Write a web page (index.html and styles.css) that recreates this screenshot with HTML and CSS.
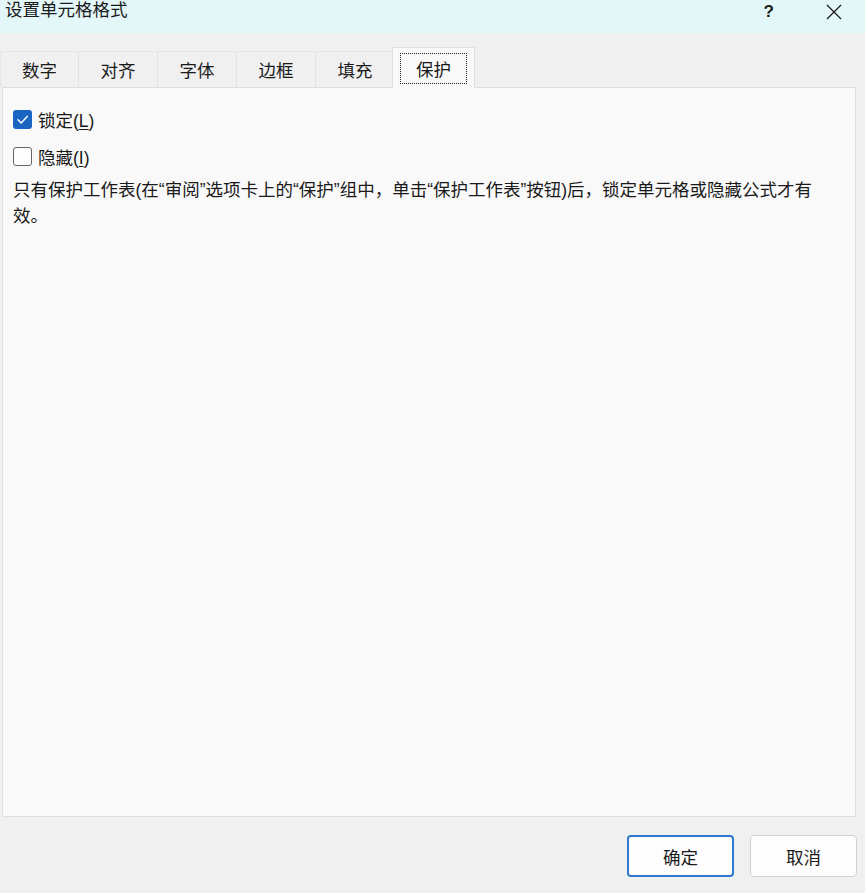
FILE: index.html
```html
<!DOCTYPE html>
<html lang="zh-CN">

<head>
    <meta charset="UTF-8">
    <meta name="viewport" content="width=device-width, initial-scale=1.0">
    <title>设置单元格格式</title>
    <link rel="stylesheet" href="styles.css">
</head>

<body>
    <div class="dialog">
        <div class="titlebar">
            <span class="title">设置单元格格式</span>
            <div class="title-buttons">
                <span class="help">?</span>
                <svg class="close" width="16" height="16" viewBox="0 0 16 16">
                    <path d="M1 1 L15 15 M15 1 L1 15" stroke="#1a1a1a" stroke-width="1.3" fill="none" />
                </svg>
            </div>
        </div>

        <div class="tabs">
            <div class="tab">数字</div>
            <div class="tab">对齐</div>
            <div class="tab">字体</div>
            <div class="tab">边框</div>
            <div class="tab">填充</div>
            <div class="tab active"><span class="focus">保护</span></div>
        </div>

        <div class="panel">
            <label class="check-row">
                <span class="box checked">
                    <svg width="19" height="19" viewBox="0 0 19 19">
                        <path d="M5 9.8 L8.2 13 L14.2 6.4" stroke="#fff" stroke-width="1.5" fill="none" stroke-linecap="round" stroke-linejoin="round" />
                    </svg>
                </span>
                <span>锁定(<u>L</u>)</span>
            </label>
            <label class="check-row">
                <span class="box"></span>
                <span>隐藏(<u>I</u>)</span>
            </label>
            <p class="note">只有保护工作表(在“审阅”选项卡上的“保护”组中，单击“保护工作表”按钮)后，锁定单元格或隐藏公式才有效。</p>
        </div>

        <div class="footer">
            <button class="btn primary">确定</button>
            <button class="btn">取消</button>
        </div>
    </div>
</body>

</html>
```

FILE: styles.css
```css
body {
    margin: 0;
    background: #f0f0f0;
    font-family: "Liberation Sans", "Noto Sans CJK SC", sans-serif;
    font-size: 17.5px;
    color: #1a1a1a;
}

.dialog {
    width: 865px;
    height: 893px;
    display: flex;
    flex-direction: column;
}

.titlebar {
    height: 33px;
    background: #e3f6f8;
    display: flex;
    justify-content: space-between;
    align-items: flex-start;
    flex-shrink: 0;
}

.title {
    padding-left: 5px;
    line-height: 21px;
}

.title-buttons {
    display: flex;
    align-items: center;
    gap: 52px;
    padding: 3px 23px 0 0;
}

.help {
    font-weight: bold;
    font-size: 17px;
    line-height: 18px;
}

.tabs {
    display: flex;
    align-items: flex-end;
    margin-top: 14px;
    height: 40px;
    flex-shrink: 0;
}

.tab {
    width: 78px;
    height: 35px;
    border-top: 1px solid #e6e6e6;
    border-right: 1px solid #e2e2e2;
    display: flex;
    align-items: center;
    justify-content: center;
    background: #f0f0f0;
}

.tab:first-child {
    width: 77px;
    border-left: 1px solid #e6e6e6;
}

.tab.active {
    width: 81px;
    height: 40px;
    background: #f9f9f9;
    border: 1px solid #e0e0e0;
    border-bottom: none;
    margin-left: -3px;
    margin-bottom: -1px;
    position: relative;
    z-index: 1;
}

.focus {
    border: 1.5px dotted #222;
    width: 65px;
    height: 29px;
    display: flex;
    align-items: center;
    justify-content: center;
    margin-top: 1px;
}

.panel {
    margin: 0 9px 0 2px;
    height: 706px;
    background: #f9f9f9;
    border: 1px solid #dedede;
    padding: 22px 10px 0 10px;
    flex-shrink: 0;
}

.check-row {
    display: flex;
    align-items: center;
    gap: 6px;
    height: 19px;
    margin-bottom: 18px;
}

.check-row u {
    text-decoration-thickness: 1px;
    text-underline-offset: 2px;
}

.box {
    width: 17px;
    height: 17px;
    border: 1px solid #666;
    border-radius: 3px;
    background: #fdfdfd;
    display: flex;
}

.box.checked {
    width: 19px;
    height: 19px;
    border: none;
    background: #1a64c2;
}

.note {
    margin: -7px 0 0;
    line-height: 26px;
    max-width: 800px;
}

.footer {
    display: flex;
    justify-content: flex-end;
    gap: 16px;
    padding: 18px 8px 0 0;
}

.btn {
    width: 107px;
    height: 42px;
    font-family: inherit;
    font-size: 17.5px;
    color: #1a1a1a;
    background: #fdfdfd;
    border: 1px solid #d0d0d0;
    border-radius: 4px;
}

.btn.primary {
    border: 2px solid #2f7ad0;
}
```
